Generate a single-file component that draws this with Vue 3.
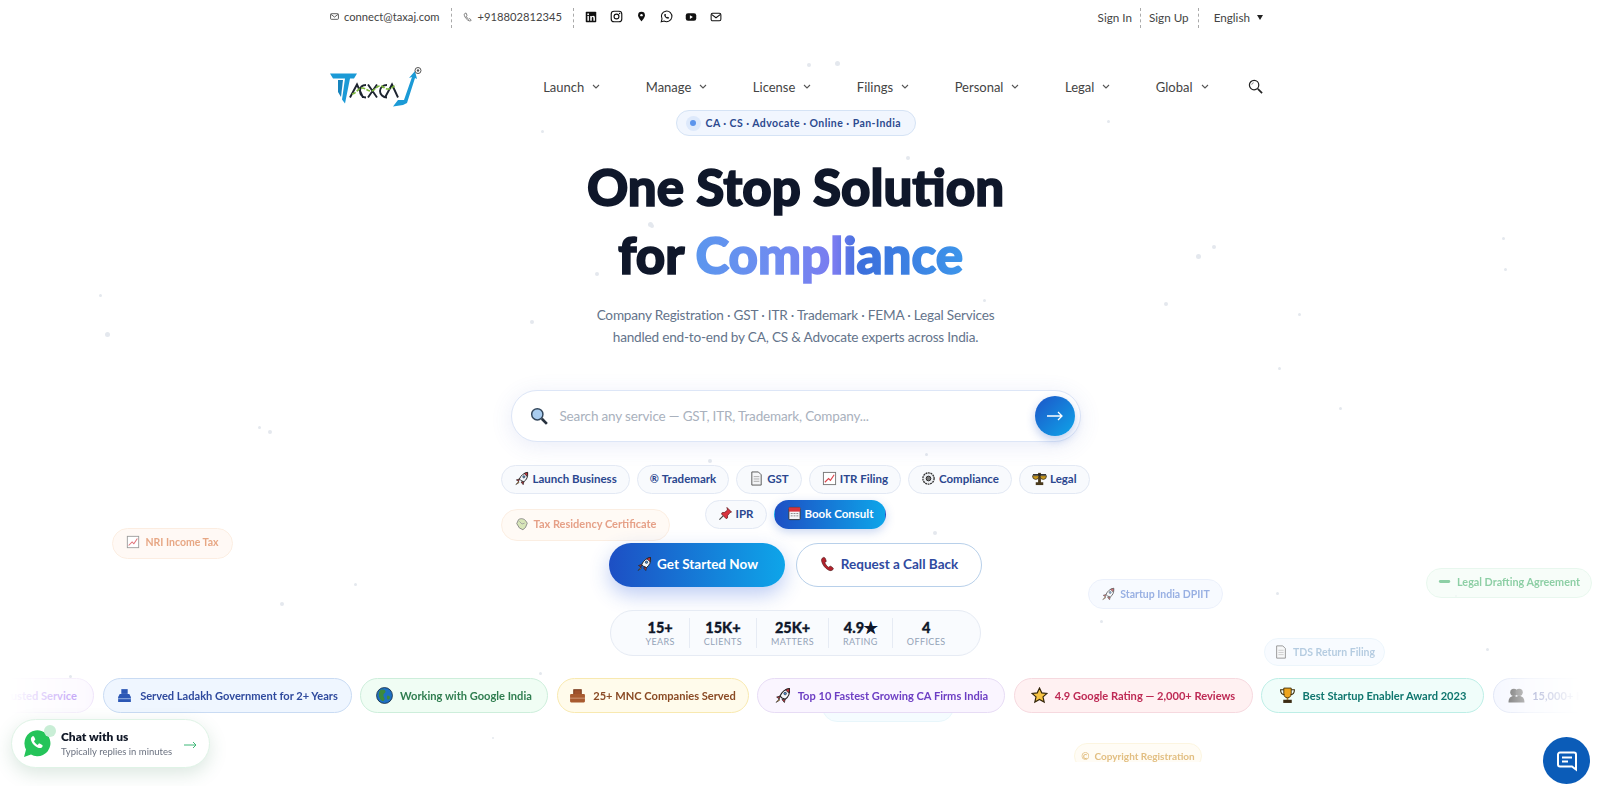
<script setup>
const icons = {
  rocket: '<path d="M14.5 1.5c-4 .6-7 3-8.800 7l1.800 1.800 3 1.200c3-2 4.600-5.500 4-10z" fill="#f3f6fb" stroke="#222" stroke-width="1"/><path d="M14.500 1.500c-1.400.2-2.600.6-3.700 1.200l3 2.800c.6-1.200.8-2.600.7-4z" fill="#d1343f" stroke="#222" stroke-width=".8"/><circle cx="10.500" cy="6.200" r="1.200" fill="#4a90d9" stroke="#222" stroke-width=".6"/><path d="M5.700 8.500 2.500 9.500l2.500 1.700zM10.500 11.500 9.800 14.600l-2.300-2.800z" fill="#c8323d" stroke="#222" stroke-width=".7"/><path d="M4.800 11.200 2 14.500l3.200-2z" fill="#f0a030" stroke="#222" stroke-width=".6"/>',
  doc: '<path d="M3 1h7l3 3v11H3z" fill="#f4f5f7" stroke="#555" stroke-width="1"/><path d="M5 6h6M5 8.500h6M5 11h6" stroke="#aaa"/>',
  chart: '<rect x="1.500" y="1.500" width="13" height="13" fill="#fff" stroke="#777"/><path d="M3 12 7 8l2 2 4-6" fill="none" stroke="#d9434b" stroke-width="1.200"/>',
  gear: '<circle cx="8" cy="8" r="6" fill="#eceff3" stroke="#333" stroke-width="1.400" stroke-dasharray="2 .7"/><circle cx="8" cy="8" r="2.500" fill="#777" stroke="#222"/>',
  scales: '<rect x="6.500" y="2" width="3" height="11" fill="#4a3a1c"/><rect x="4" y="12" width="8" height="3" fill="#4a3a1c"/><path d="M1 4h14" stroke="#222" stroke-width="1.400"/><path d="M.5 5h7a3.500 4 0 0 1-7 0zM8.500 5h7a3.500 4 0 0 1-7 0z" fill="#c9971c" stroke="#222" stroke-width=".7"/>',
  pin: '<path d="M9.500 1.500 14.500 6.500l-1.600.5-2.600 3-.2 2.800-1.400.7-5-5 .6-1.400 2.900-.3 2.900-2.500z" fill="#d9343e" stroke="#5c1015" stroke-width=".7"/><path d="M5.500 10.500 1.500 14.500" stroke="#444" stroke-width="1.200"/>',
  cal: '<rect x="2" y="1.500" width="12" height="13" rx="1" fill="#f4f5f7" stroke="#333"/><rect x="2" y="1.500" width="12" height="4.500" fill="#d8343e"/><path d="M4 8h2M7 8h2M10 8h2M4 10.500h2M7 10.500h2M10 10.500h2" stroke="#888"/>',
  phone: '<path d="M3.200 1.500c-1.500.8-2 2.200-1.500 4 .9 3.500 3.500 6.800 6.800 8.600 1.800.9 3.300.7 4.500-.6.6-.7.4-1.300-.2-1.800l-1.700-1.300c-.6-.4-1.100-.3-1.600.2l-.7.8c-1.700-.9-3.400-2.900-4-4.800l.9-.6c.5-.4.7-.9.400-1.500L5.200 2.200c-.4-.7-1.100-1-2-.7z" fill="#b3212c" stroke="#411" stroke-width=".6"/>',
  bank: '<path d="M5 2h6v4.500H5z" fill="#2b57b5"/><path d="M3.500 6.500h9l1.500 3v4.500H2V9.500z" fill="#2b57b5"/><path d="M2 11h12" stroke="#bcd0f0" stroke-width=".7"/>',
  globe: '<circle cx="8" cy="8" r="7.500" fill="#1e70c2" stroke="#123" stroke-width=".7"/><path d="M5 2.500c2-.7 4 .2 4 1.800S6.800 6 7 8s2 3 .5 4.800S3 11 2.700 8 3 3.400 5 2.500zM11 8c1.500 0 2.500 1 2 2.500s-2 1.800-2.500.5.0-3 .5-3z" fill="#3c8a3e"/>',
  case: '<path d="M4.500 2.500h7v5h-7z" fill="#a0522d" stroke="#7a3d1f"/><rect x="1" y="6.500" width="14" height="8" rx="1" fill="#a85a2f"/><path d="M1 10.500h14" stroke="#e0b090" stroke-width=".7"/>',
  star: '<path d="m8 1 2.100 4.500 4.900.5-3.700 3.300 1.100 4.900L8 11.700l-4.400 2.500 1.100-4.900L1 6l4.900-.5z" fill="#f6c344" stroke="#33250a" stroke-width="1.100"/>',
  trophy: '<path d="M4.500 1h7v5a3.500 4 0 0 1-7 0z" fill="#eda41e" stroke="#3a2a08" stroke-width=".8"/><path d="M4.500 2.500H1.500c0 3 1 4.500 3.500 4.500M11.500 2.500h3c0 3-1 4.500-3.500 4.500" fill="none" stroke="#3a2a08"/><path d="M7.200 10h1.600v2H7.200z" fill="#a0701a"/><rect x="4" y="12" width="8" height="3" fill="#3b2c14"/>',
  people: '<circle cx="5.500" cy="5" r="3.400" fill="#555"/><circle cx="10.500" cy="5" r="3.400" fill="#666"/><path d="M.5 14.500c0-4 2-6 5-6s4.500 2 4.500 6zM6 14.500c0-4 1.500-6 4.500-6s5 2 5 6z" fill="#555"/>',
  shield: '<path d="M8 1l6 2v5c0 3-2.500 5.500-6 7-3.500-1.500-6-4-6-7V3z" fill="#c9b6ee"/>',
  scroll: '<path d="M4 3c3-2 6-1 8 1l2 3-2 5-3 2.500-4-2-3-5z" fill="#cfe0a8" stroke="#555" stroke-width=".9"/><path d="M5 5l3 3 3-1" fill="none" stroke="#888"/>',
  dash: '<rect x="1" y="5.800" width="13" height="3.400" rx="1.700" fill="#5dbb7f"/>',
};

const topIcons = [
  { w: 12, h: '<rect x="1" y="1" width="14" height="14" rx="1" fill="#111"/><rect x="3.200" y="6.500" width="2" height="6.500" fill="#fff"/><circle cx="4.200" cy="4.200" r="1.200" fill="#fff"/><path d="M7 6.500h2v1c.5-.8 1.200-1.200 2-1.200 1.500 0 2.200 1 2.200 2.700V13h-2V9.300c0-.8-.3-1.300-1-1.300s-1.200.5-1.200 1.300V13H7z" fill="#fff"/>' },
  { w: 13, h: '<rect x="1.500" y="1.500" width="13" height="13" rx="3.500" fill="none" stroke="#111" stroke-width="1.400"/><circle cx="8" cy="8" r="3" fill="none" stroke="#111" stroke-width="1.400"/><circle cx="11.800" cy="4.200" r=".9" fill="#111"/>' },
  { w: 11, h: '<path d="M8 1a5 5 0 0 0-5 5c0 3.500 5 9 5 9s5-5.500 5-9a5 5 0 0 0-5-5z" fill="#111"/><circle cx="8" cy="6" r="1.800" fill="#fff"/>' },
  { w: 13, h: '<path d="M1.500 14.500l1-3.500a6.500 6.500 0 1 1 2.500 2.500z" fill="none" stroke="#111" stroke-width="1.300"/><path d="M6 4.800c-.8.4-1 1.300-.6 2.300.6 1.600 1.900 2.900 3.500 3.500 1 .4 2 .1 2.300-.7l-.2-.8-1.500-.8-.8.7c-.9-.4-1.500-1-1.900-1.900l.7-.8-.7-1.500z" fill="#111"/>' },
  { w: 12, h: '<rect x="1" y="3" width="14" height="10" rx="3" fill="#111"/><path d="M6.500 5.500v5l4-2.500z" fill="#fff"/>' },
  { w: 12, h: '<rect x="1.500" y="3" width="13" height="10" rx="2" fill="none" stroke="#111" stroke-width="1.400"/><path d="M2 4.500l6 4.500 6-4.500" fill="none" stroke="#111" stroke-width="1.400"/>' },
];

const nav = ['Launch', 'Manage', 'License', 'Filings', 'Personal', 'Legal', 'Global'];

const quick = [
  { t: 'Launch Business', i: 'rocket' },
  { t: 'Trademark', glyph: '®' },
  { t: 'GST', i: 'doc' },
  { t: 'ITR Filing', i: 'chart' },
  { t: 'Compliance', i: 'gear' },
  { t: 'Legal', i: 'scales' },
  { t: 'IPR', i: 'pin' },
  { t: 'Book Consult', i: 'cal', on: true },
];

const stats = [
  ['15+', 'YEARS'], ['15K+', 'CLIENTS'], ['25K+', 'MATTERS'], ['4.9★', 'RATING'], ['4', 'OFFICES'],
];

const trust = [
  { t: 'Trusted Service', i: 'shield', w: 134, c: '#7c3aed', bg: '#faf5ff', b: '#eadcf8' },
  { t: 'Served Ladakh Government for 2+ Years', i: 'bank', w: 249, c: '#2f4a9e', bg: '#eff6ff', b: '#c9dbf3' },
  { t: 'Working with Google India', i: 'globe', w: 188, c: '#2f7d4f', bg: '#f0fdf4', b: '#cdeedb' },
  { t: '25+ MNC Companies Served', i: 'case', w: 192, c: '#8a4a24', bg: '#fffbeb', b: '#f8e9b0' },
  { t: 'Top 10 Fastest Growing CA Firms India', i: 'rocket', w: 248, c: '#6d3fc4', bg: '#faf5ff', b: '#e7dcf5' },
  { t: '4.9 Google Rating — 2,000+ Reviews', i: 'star', w: 239, c: '#be2a55', bg: '#fff1f2', b: '#f6d9df' },
  { t: 'Best Startup Enabler Award 2023', i: 'trophy', w: 223, c: '#0f766e', bg: '#f0fdfa', b: '#bdeee6' },
  { t: '15,000+ Happy Clients', i: 'people', w: 168, c: '#3b4a9e', bg: '#f5f7ff', b: '#dfe5f5' },
];

const floats = [
  { t: 'NRI Income Tax', i: 'chart', x: 112, y: 528, w: 121, h: 31, fs: 10.5, pb: 3, c: '#e08a5c', bg: '#fff8f2', b: '#fbe8d8', o: .75 },
  { t: 'Tax Residency Certificate', i: 'scroll', x: 501, y: 509, w: 169, h: 32, fs: 11, pb: 3, c: '#e0896a', bg: '#fff9f3', b: '#fbeadb', o: .8 },
  { t: 'Startup India DPIIT', i: 'rocket', x: 1088, y: 579, w: 135, h: 30, fs: 10.5, pb: 0, c: '#6d8fd8', bg: '#f5f8ff', b: '#e3ebfa', o: .7 },
  { t: 'Legal Drafting Agreement', i: 'dash', x: 1426, y: 568, w: 166, h: 30, fs: 10.8, pb: 3, c: '#5dbb7f', bg: '#f4fdf7', b: '#dff5e7', o: .7 },
  { t: 'TDS Return Filing', i: 'doc', x: 1264, y: 638, w: 121, h: 28, fs: 10.5, pb: 0, c: '#8fb2d2', bg: '#f5faff', b: '#e3f0fa', o: .65 },
  { t: 'Copyright Registration', glyph: '©', x: 1074, y: 743, w: 128, h: 26, fs: 10, pb: 1, c: '#d9a958', bg: '#fffcf2', b: '#fbf2d6', o: .75, clip: 19 },
  { t: 'Filing Registry', x: 822, y: 692, w: 132, h: 30, fs: 10.5, pb: 0, c: '#8fb2d2', bg: '#f1fbff', b: '#dff3fa', o: .7 },
];

const dots = [
  [835,61,5],[807,63,4],[648,222,5],[530,320,4],[105,332,5],[1196,254,5],[1212,245,4],[1164,302,4],[1278,367,3],[268,430,4],[258,426,3],
  [1276,592,3],[1107,120,3],[99,294,3],[906,156,4],[1298,313,3],[1504,268,3],[1502,237,3],[983,299,3],[595,272,4],
  [925,453,3],[708,459,4],[933,531,4],[280,602,4],[354,583,3],[1100,620,3],[1486,648,3],
  [69,675,3],[539,672,3],[492,737,2],[1339,407,3],[541,130,3],[650,224,4],[1455,595,2],
];
</script>

<template>
  <div class="page">
    <span v-for="(d, n) in dots" :key="n" class="dot" :style="{ left: d[0] + 'px', top: d[1] + 'px', width: d[2] + 'px', height: d[2] + 'px' }"></span>

    <div
      v-for="f in floats" :key="f.t" class="float-box"
      :style="{ left: f.x + 'px', top: f.y + 'px', width: f.w + 'px', height: (f.clip || f.h) + 'px', opacity: f.o }"
    >
      <div class="float" :style="{ height: f.h + 'px', paddingBottom: f.pb + 'px', fontSize: f.fs + 'px', color: f.c, background: f.bg, borderColor: f.b }">
        <svg v-if="f.i" class="ic14" viewBox="0 0 16 16" v-html="icons[f.i]"></svg>
        <span v-else-if="f.glyph">{{ f.glyph }}</span>
        <span>{{ f.t }}</span>
      </div>
    </div>

    <div class="wrap">
      <div class="topbar">
        <div class="top-left">
          <span class="ti">
            <svg width="9" height="9" viewBox="0 0 16 16"><rect x="1" y="3" width="14" height="10" rx="1.500" fill="none" stroke="#444" stroke-width="1.500"/><path d="M1.500 4l6.500 5 6.500-5" fill="none" stroke="#444" stroke-width="1.500"/></svg>
            connect@taxaj.com
          </span>
          <i class="vsep"></i>
          <span class="ti">
            <svg width="10" height="10" viewBox="0 0 16 16"><path d="M3.500 2c-1.500.8-1.800 2-1.300 3.500 1 3.500 4 7 7.300 8.500 1.700.6 3 .2 3.800-1.200l-2.800-2.200-1.500 1c-1.600-.8-3.200-2.800-3.800-4.500l1.300-1.200L5.200 2z" fill="none" stroke="#555" stroke-width="1.200"/></svg>
            +918802812345
          </span>
          <i class="vsep"></i>
          <div class="socials">
            <span v-for="(s, n) in topIcons" :key="n" class="sbox">
              <svg :width="s.w" :height="s.w" viewBox="0 0 16 16" v-html="s.h"></svg>
            </span>
          </div>
        </div>
        <div class="top-right">
          <span>Sign In</span>
          <i class="vsep"></i>
          <span>Sign Up</span>
          <i class="vsep last"></i>
          <span class="lang">English <b class="caret"></b></span>
        </div>
      </div>

      <header class="header">
        <svg class="logo" width="94" height="40" viewBox="0 0 94 40" aria-label="Taxaj logo">
          <path d="M0 6.500h27l-3 5h-4l-5 25-3-4 3-21H3z" fill="#1b9ad6"/>
          <path d="M8 13h5l-2 17-3-5z" fill="#1784bd"/>
          <path d="M20 30.500 27 17.500l6 13M36 18c-4 0-6 2.500-6 6s2.500 6.500 6 6.500M38 17.500l9 13M47 17.500l-9 13M57 18c-4 0-7 2.500-7 6s3 6.500 7 6.500M55 30.500l7-13 6 13" fill="none" stroke="#1d2430" stroke-width="1.900"/>
          <path d="M22 27c5-1 6-6 10-6s5 3 9 3 5-5 9-5 4 3 8 3 5-3 8-4" fill="none" stroke="#7cb83a" stroke-width="1.600" stroke-dasharray="4 1.500"/>
          <path d="M63 39.500l5-6.500h6l8-23-3 1 6-7 2 8-2-1-8 25-4 2z" fill="#1b9ad6"/>
          <circle cx="88" cy="3.500" r="3" fill="#fff" stroke="#555"/>
          <circle cx="88" cy="3.500" r="1.200" fill="#555"/>
        </svg>
        <nav class="nav">
          <span v-for="n in nav" :key="n" class="nav-item">
            {{ n }}
            <svg width="8" height="5" viewBox="0 0 8 5"><path d="M1 1l3 3 3-3" fill="none" stroke="#555" stroke-width="1.100"/></svg>
          </span>
          <svg class="nav-search" width="15" height="15" viewBox="0 0 16 16"><circle cx="6.500" cy="6.500" r="5" fill="none" stroke="#222" stroke-width="1.300"/><path d="M4 6a2.500 2.500 0 0 1 2-2" fill="none" stroke="#777"/><path d="M10.500 10.500l4.500 4.500" stroke="#222" stroke-width="1.800"/></svg>
        </nav>
      </header>

      <main class="hero">
        <div class="badge"><span class="pulse"><i></i></span>CA · CS · Advocate · Online · Pan-India</div>
        <h1 class="title">One Stop Solution<br /><span class="line2">for <span class="grad">Compliance</span></span></h1>
        <p class="sub">Company Registration · GST · ITR · Trademark · FEMA · Legal Services<br />handled end-to-end by CA, CS &amp; Advocate experts across India.</p>

        <div class="search">
          <svg width="18" height="18" viewBox="0 0 16 16"><circle cx="6.500" cy="6.500" r="5" fill="#a9cdf0" stroke="#33475c" stroke-width="1.300"/><path d="M10.500 10.500l4.500 4.500" stroke="#27313d" stroke-width="2.400"/></svg>
          <span class="ph">Search any service — GST, ITR, Trademark, Company...</span>
          <span class="go">
            <svg width="18" height="10" viewBox="0 0 18 10"><path d="M1 5h15M12 1l4 4-4 4" fill="none" stroke="#fff" stroke-width="1.300"/></svg>
          </span>
        </div>

        <div class="quick">
          <span v-for="q in quick" :key="q.t" class="qp" :class="{ on: q.on }">
            <svg v-if="q.i" class="ic15" viewBox="0 0 16 16" v-html="icons[q.i]"></svg>
            <span v-else class="g">{{ q.glyph }}</span>
            {{ q.t }}
          </span>
        </div>

        <div class="cta">
          <span class="btn primary"><svg class="ic16" viewBox="0 0 16 16" v-html="icons.rocket"></svg>Get Started Now</span>
          <span class="btn ghost"><svg class="ic16" viewBox="0 0 16 16" v-html="icons.phone"></svg>Request a Call Back</span>
        </div>

        <div class="stats">
          <div v-for="s in stats" :key="s[1]" class="stat">
            <b>{{ s[0] }}</b>
            <small>{{ s[1] }}</small>
          </div>
        </div>
      </main>

      <div class="marquee">
        <div class="track">
          <span
            v-for="p in trust" :key="p.t" class="tp"
            :style="{ width: p.w + 'px', color: p.c, background: p.bg, borderColor: p.b }"
          >
            <svg class="ic17" viewBox="0 0 16 16" v-html="icons[p.i]"></svg>
            {{ p.t }}
          </span>
        </div>
      </div>
    </div>

    <div class="wa">
      <i class="wa-dot"></i>
      <svg width="28" height="29" viewBox="0 0 28 29"><path d="M1 28l2-7.500A13 13 0 1 1 8 25.600z" fill="#25c45a"/><path d="M9.500 7.500c-1.700.8-2 2.500-1.200 4.500 1.200 3 3.700 5.500 6.700 6.700 2 .8 3.800.3 4.500-1.300.3-.7.200-1.200-.3-1.500l-2.500-1.300c-.5-.2-.9-.1-1.200.3l-.8 1c-1.700-.7-3-2-3.800-3.800l1-.8c.4-.3.5-.7.300-1.200l-1.100-2.400c-.3-.6-1-.9-1.600-.7z" fill="#fff"/></svg>
      <div class="wa-text"><b>Chat with us</b><small>Typically replies in minutes</small></div>
      <svg class="wa-arrow" width="13" height="8" viewBox="0 0 13 8"><path d="M0 4h12M9 1l3 3-3 3" fill="none" stroke="#3fb878" stroke-width="1"/></svg>
    </div>

    <div class="chat-btn">
      <svg width="24" height="24" viewBox="0 0 24 24"><path d="M5 3.500h14a2 2 0 0 1 2 2v15l-4-3H5a2 2 0 0 1-2-2v-10a2 2 0 0 1 2-2z" fill="none" stroke="#fff" stroke-width="2"/><path d="M7 8.500h10M7 12.500h6" stroke="#fff" stroke-width="2"/></svg>
    </div>
  </div>
</template>

<style scoped>
.page {
  position: relative;
  width: 1600px;
  height: 786px;
  overflow: hidden;
  background: #fff;
  font-family: Lato, "Open Sans", sans-serif;
}
.dot {
  position: absolute;
  border-radius: 50%;
  background: #e4e8ee;
}
.float-box {
  position: absolute;
  overflow: hidden;
}
.float {
  display: flex;
  align-items: center;
  justify-content: center;
  gap: 5px;
  box-sizing: border-box;
  border: 1px solid;
  border-radius: 16px;
  font-weight: 700;
  white-space: nowrap;
}
.ic14 { width: 14px; height: 14px; flex: none; }
.ic15 { width: 15px; height: 15px; flex: none; }
.ic16 { width: 16px; height: 16px; flex: none; }
.ic17 { width: 17px; height: 17px; flex: none; }

.wrap {
  position: relative;
  width: 1591px;
  display: flex;
  flex-direction: column;
}
.topbar {
  box-sizing: border-box;
  height: 35px;
  padding: 0 328px 2px 330px;
  display: flex;
  justify-content: space-between;
  align-items: center;
  font-size: 11.700px;
  color: #444;
}
.top-left, .top-right { display: flex; align-items: center; }
.top-left { font-size: 11.200px; }
.top-left .vsep { margin-top: 2px; }
.top-right .vsep { margin-top: 2px; }
.ti { display: inline-flex; align-items: center; gap: 5px; }
.vsep {
  display: block;
  width: 0;
  height: 20px;
  border-left: 1px dashed #aaa;
  margin: 0 11px;
}
.top-right .vsep { margin-left: 8px; margin-right: 8px; }
.top-right .vsep.last { margin-left: 9px; margin-right: 15px; }
.socials { display: flex; align-items: center; gap: 12px; }
.sbox { width: 13px; height: 15px; display: flex; align-items: center; justify-content: center; }
.lang { display: inline-flex; align-items: center; gap: 7px; }
.caret {
  width: 0;
  height: 0;
  margin-top: 2px;
  border: 3.500px solid transparent;
  border-top: 5px solid #222;
  border-bottom: 0;
}
.header {
  box-sizing: border-box;
  height: 75px;
  padding: 28px 328px 0 330px;
  display: flex;
  align-items: center;
  justify-content: space-between;
}
.logo { display: block; }
.nav { display: flex; align-items: center; gap: 45.500px; font-size: 13px; color: #444; }
.nav-item { display: inline-flex; align-items: center; gap: 8px; }
.nav-search { margin-left: -6px; }

.hero {
  display: flex;
  flex-direction: column;
  align-items: center;
}
.badge {
  box-sizing: border-box;
  height: 26px;
  width: 240px;
  padding-left: 9px;
  display: flex;
  align-items: center;
  gap: 5px;
  border: 1px solid #d5e3f5;
  border-radius: 13px;
  background: #f1f6fe;
  color: #2c4a8f;
  font-size: 10.500px;
  font-weight: 700;
  letter-spacing: .45px;
  white-space: nowrap;
}
.pulse {
  width: 15px;
  height: 15px;
  border-radius: 50%;
  background: #dde9fb;
  display: flex;
  align-items: center;
  justify-content: center;
}
.pulse i { width: 6px; height: 6px; border-radius: 50%; background: #5b94ec; }
.title {
  margin: 17px 0 0;
  font-size: 51px;
  font-weight: 900;
  line-height: 68px;
  text-align: center;
  color: #0f172a;
  -webkit-text-stroke: 1.600px #0f172a;
  paint-order: stroke fill;
}
.line2 { display: inline-block; margin-right: 10px; }
.grad {
  background: linear-gradient(90deg, #5b96ee 0%, #6f8cf0 30%, #7a7cf0 52%, #3b6fdc 62%, #3d95ea 100%);
  -webkit-background-clip: text;
  background-clip: text;
  color: transparent;
  -webkit-text-stroke: 1.600px transparent;
}
.sub {
  margin: 15px 0 0;
  font-size: 13.600px;
  letter-spacing: -.2px;
  line-height: 22px;
  color: #64748b;
  text-align: center;
}
.search {
  box-sizing: border-box;
  margin-top: 42px;
  width: 570px;
  height: 52px;
  padding: 0 5px 0 18px;
  display: flex;
  align-items: center;
  border: 1.500px solid #dde6f7;
  border-radius: 26px;
  background: #fff;
  box-shadow: 0 4px 22px rgba(70, 100, 200, .12);
}
.ph { flex: 1; margin-left: 12px; font-size: 13.500px; letter-spacing: -.16px; color: #a9b1bd; }
.go {
  width: 40px;
  height: 40px;
  border-radius: 50%;
  background: linear-gradient(135deg, #1d55c8, #0ea5e9);
  display: flex;
  align-items: center;
  justify-content: center;
  box-shadow: 0 4px 10px rgba(40, 90, 200, .3);
}
.quick {
  margin-top: 23px;
  width: 620px;
  display: flex;
  flex-wrap: wrap;
  justify-content: center;
  gap: 6px 7px;
}
.qp {
  box-sizing: border-box;
  height: 29px;
  padding: 0 12px 2px;
  display: inline-flex;
  align-items: center;
  gap: 3px;
  border: 1px solid #e3e9f4;
  border-radius: 15px;
  background: #f8fafd;
  color: #2b478f;
  font-size: 11.500px;
  font-weight: 700;
}
.qp .g { font-size: 11px; }
.qp.on {
  color: #fff;
  border-color: transparent;
  background: linear-gradient(90deg, #1d4fc4, #0ea5e9);
  box-shadow: 0 3px 10px rgba(40, 90, 200, .25);
}
.cta { margin-top: 14px; display: flex; gap: 11px; }
.btn {
  box-sizing: border-box;
  height: 44px;
  padding-bottom: 2px;
  border-radius: 22px;
  display: inline-flex;
  align-items: center;
  justify-content: center;
  gap: 5px;
  font-size: 13.500px;
  font-weight: 700;
}
.primary {
  width: 176px;
  color: #fff;
  background: linear-gradient(90deg, #1d4fc4, #0ea5e9);
  box-shadow: 0 8px 20px rgba(40, 90, 220, .3);
}
.ghost {
  width: 186px;
  color: #2f4aa0;
  background: #fff;
  border: 1.500px solid #b8d0ea;
}
.stats {
  box-sizing: border-box;
  margin-top: 23px;
  height: 46px;
  padding: 0 20px;
  display: flex;
  align-items: center;
  border: 1px solid #e6ebf4;
  border-radius: 23px;
  background: #f9fbfe;
}
.stat {
  height: 30px;
  padding: 0 14px;
  display: flex;
  flex-direction: column;
  align-items: center;
  justify-content: center;
  border-right: 1px solid #e6ebf4;
}
.stat:last-child { border-right: 0; }
.stat b { font-size: 14.500px; font-weight: 900; line-height: 17px; color: #0f172a; -webkit-text-stroke: .3px #0f172a; }
.stat small { font-size: 9px; line-height: 12px; letter-spacing: .4px; color: #94a3b8; }
.marquee {
  margin-top: 22px;
  width: 1591px;
  overflow: hidden;
  -webkit-mask-image: linear-gradient(90deg, transparent 10px, rgba(0,0,0,.5) 85px, #000 100px, #000 1490px, rgba(0,0,0,.35) 1530px, transparent 1580px);
  mask-image: linear-gradient(90deg, transparent 10px, rgba(0,0,0,.5) 85px, #000 100px, #000 1490px, rgba(0,0,0,.35) 1530px, transparent 1580px);
}
.track { display: flex; gap: 8.500px; margin-left: -40px; }
.tp {
  box-sizing: border-box;
  flex: none;
  height: 35px;
  display: inline-flex;
  align-items: center;
  justify-content: center;
  gap: 7px;
  border: 1px solid;
  border-radius: 18px;
  font-size: 11.100px;
  font-weight: 700;
  white-space: nowrap;
}
.wa {
  position: absolute;
  left: 11px;
  top: 719px;
  box-sizing: border-box;
  width: 199px;
  height: 49px;
  padding-left: 11px;
  display: flex;
  align-items: center;
  gap: 10px;
  background: #fff;
  border: 1px solid #dff3e6;
  border-radius: 25px;
  box-shadow: 0 6px 18px rgba(60, 130, 90, .18);
}
.wa-dot {
  position: absolute;
  left: 32px;
  top: 5px;
  width: 12px;
  height: 12px;
  border-radius: 50%;
  background: #c9eed6;
}
.wa-text { display: flex; flex-direction: column; }
.wa-text b { font-size: 12px; line-height: 16px; color: #111827; font-weight: 800; }
.wa-text small { font-size: 9.500px; line-height: 13px; color: #6b7280; }
.wa-arrow { position: absolute; right: 12px; top: 21px; }
.chat-btn {
  position: absolute;
  left: 1543px;
  top: 737px;
  width: 47px;
  height: 47px;
  border-radius: 50%;
  background: #0b5cb8;
  display: flex;
  align-items: center;
  justify-content: center;
}
</style>
